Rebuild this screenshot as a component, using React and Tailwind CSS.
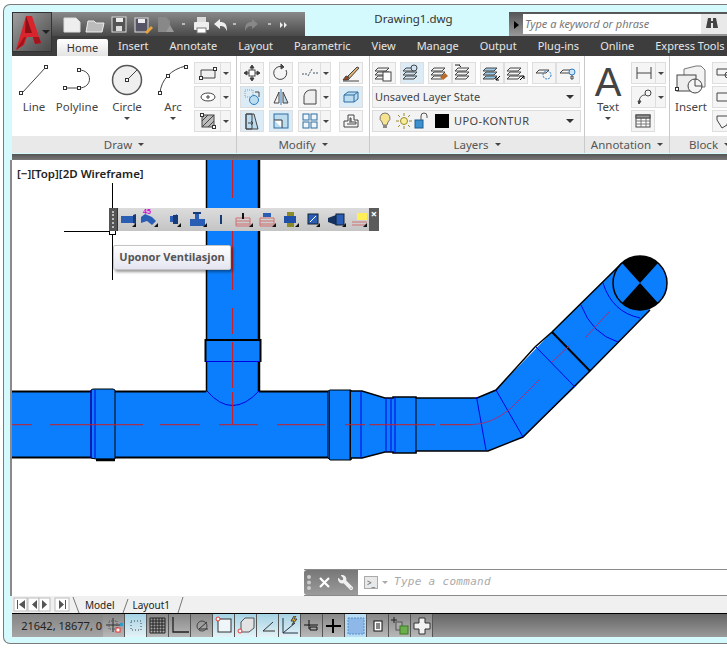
import { FaWrench } from "react-icons/fa";

const ui = { fontFamily: '"Noto Sans", "Open Sans", sans-serif' };

const Caret = ({ className = "" }) => (
  <span className={`inline-block w-0 h-0 border-l-[3px] border-r-[3px] border-t-[3px] border-l-transparent border-r-transparent border-t-[#444] ${className}`} />
);

const Ico = ({ w = 18, h = 18, children }) => (
  <svg width={w} height={h} viewBox={`0 0 ${w} ${h}`} fill="none" stroke="#444" strokeWidth="1" className="block">
    {children}
  </svg>
);

const Grip = ({ x, y }) => <rect x={x - 1.5} y={y - 1.5} width="3" height="3" fill="#fff" stroke="#333" strokeWidth="1" />;

// 24px tool button from the ribbon
const Tool = ({ children, on, className = "" }) => (
  <div className={`w-[24px] h-[22px] flex items-center justify-center border border-[#dedede] ${on ? "bg-[#dcecf6]" : "bg-[#f5f5f5]"} ${className}`}>
    {children}
  </div>
);

const Split = ({ children, w = 24 }) => (
  <div className="flex h-[22px] border border-[#dedede] bg-[#f5f5f5]" style={{ width: w + 11 }}>
    <div className="flex-1 flex items-center justify-center">{children}</div>
    <div className="w-[10px] flex items-center justify-center border-l border-[#dedede]"><Caret /></div>
  </div>
);

const BigTool = ({ w, label, arrow, children }) => (
  <div className="flex flex-col items-center shrink-0" style={{ width: w }}>
    <div className="h-[36px] mt-[6px] flex items-center justify-center">{children}</div>
    <span className="text-[11.5px] leading-[16px] mt-[1px] text-[#444]">{label}</span>
    {arrow && <Caret className="mt-[2px]" />}
  </div>
);

const Panel = ({ w, title, children }) => (
  <div className="flex flex-col shrink-0 border-r border-[#c9c9c9]" style={{ width: w }}>
    <div className="h-[80px] bg-white overflow-hidden">{children}</div>
    <div className="h-[17px] bg-[#e9e9e9] flex items-center justify-center gap-[6px] text-[11.5px] text-[#555] whitespace-nowrap">
      {title}
      <Caret />
    </div>
  </div>
);

const QatIcons = () => (
  <svg width="230" height="20" viewBox="0 0 230 20" className="block">
    <path d="M2 3h12l4 4v10H2z" fill="#eee" stroke="#ddd" />
    <path d="M26 6h6l2 2h8l-2 9H24z" fill="#bbb" stroke="#eee" />
    <rect x="50" y="2" width="14" height="15" fill="#555" stroke="#ddd" /><rect x="54" y="3" width="7" height="4" fill="#eee" /><rect x="54" y="11" width="6" height="5" fill="#ddd" />
    <rect x="73" y="3" width="13" height="14" fill="#556" stroke="#ddd" /><rect x="76" y="4" width="7" height="4" fill="#eee" /><path d="M83 17l6-6 2 2-6 6z" fill="#e8a33a" />
    <path d="M96 2h8l4 4v11H96z" fill="#888" /><path d="M104 17l4-7 4 7z" fill="#999" />
    <path d="M120 9h3" stroke="#bbb" strokeWidth="2" />
    <rect x="132" y="7" width="15" height="8" rx="1" fill="#eee" /><rect x="135" y="2" width="9" height="5" fill="#ddd" /><rect x="135" y="13" width="9" height="5" fill="#fff" stroke="#777" />
    <path d="M152 9l6-5v3c5 0 7 2 7 9-2-4-3-5-7-5v3z" fill="#eee" />
    <path d="M171 9h3" stroke="#bbb" strokeWidth="2" />
    <path d="M196 9l-6-5v3c-5 0-7 2-7 9 2-4 3-5 7-5v3z" fill="#888" />
    <path d="M206 9h3" stroke="#bbb" strokeWidth="2" />
    <path d="M218 7l3 3-3 3zM222 7l3 3-3 3z" fill="#eee" />
  </svg>
);

const AppButton = () => (
  <div className="absolute left-[8px] top-[7px] w-[40px] h-[40px] bg-gradient-to-br from-[#a0a0a0] to-[#4a4a4a] border border-[#333]">
    <svg width="38" height="38" viewBox="0 0 38 38">
      <path d="M3 37L13 3h6l9 27-6 1-2-7h-6l-3 8z" fill="#d8242c" />
      <path d="M13 3l-1 17h7z" fill="#8a1016" />
      <path d="M3 37l7-5 3-8h7l2 7 6-1-2-6H11z" fill="#a2141b" />
      <path d="M29 17h8l-4 4z" fill="#222" />
    </svg>
  </div>
);

const LayerStack = ({ extra, fill = "none" }) => (
  <Ico w={20} h={18}>
    <path d="M4 4h11l-3 3H1zM4 8h11l-3 3H1zM4 12h11l-3 3H1z" fill={fill} />
    {extra}
  </Ico>
);

const Toolbar = () => (
  <div className="absolute left-[97px] top-[48px] w-[270px] h-[23px] bg-[#5b5b5b] flex items-center">
    <div className="w-[9px] h-full bg-[#555] border-r border-[#333] flex items-center justify-center">
      <div className="w-[2px] h-[17px] border-l-2 border-dotted border-[#bbb]" />
    </div>
    <div className="w-[251px] h-full bg-gradient-to-b from-[#dcdcdc] to-[#c4c4c4]">
      <svg width="251" height="23" viewBox="118 208 251 23" className="block">
        <g fill="#2a5db4">
          <rect x="121" y="216" width="12" height="7" /><path d="M133 215l3-1v10l-3-1z" fill="#173a78" />
          <path d="M145 214l7 3 4 4-4 4-5-4-6 2v-6z" /><text x="143" y="214" fontSize="7" fontWeight="700" fill="#d400d4" fontFamily="Liberation Sans">45</text>
          <path d="M170 216h4l3-2v10l-3-2h-4z" /><rect x="173" y="215" width="5" height="9" fill="#173a78" />
          <rect x="190" y="219" width="15" height="7" /><rect x="195" y="213" width="4" height="7" /><rect x="193" y="212" width="8" height="2" fill="#173a78" />
          <rect x="220" y="215" width="2" height="9" fill="#173a78" />
        </g>
        <g fill="none">
          <path d="M236 218h14v8h-14zM236 221h14M236 224h14" stroke="#d07070" /><path d="M243 213v6" stroke="#111" strokeWidth="2" />
          <path d="M260 218h14v8h-14zM260 221h14M260 224h14" stroke="#d07070" /><rect x="263" y="213" width="8" height="4" fill="#2a5db4" />
        </g>
        <rect x="287" y="212" width="7" height="15" fill="#8a8a2a" /><rect x="284" y="216" width="12" height="7" fill="#1f4fa8" />
        <rect x="308" y="214" width="10" height="10" fill="#2a5db4" stroke="#123" /><path d="M310 222l6-6" stroke="#fff" />
        <path d="M328 218l8-3v10l-8-3z" fill="#16305f" /><rect x="336" y="214" width="8" height="11" fill="#2a5db4" stroke="#123" />
        <path d="M352 222h15M352 225h15" stroke="#d07070" /><rect x="357" y="213" width="10" height="7" fill="#ffee55" />
        <g fill="#111">
          <path d="M136 227l-4 0 4-4zM158 227h-4l4-4zM181 227h-4l4-4zM207 227h-4l4-4zM253 227h-4l4-4zM276 227h-4l4-4zM299 227h-4l4-4zM320 227h-4l4-4zM346 227h-4l4-4zM367 227h-4l4-4z" />
        </g>
      </svg>
    </div>
    <div className="flex-1 h-full bg-[#5b5b5b] text-white text-[11px] font-bold leading-[11px] text-center">×</div>
  </div>
);

const Drawing = () => (
  <svg width="715" height="436" viewBox="12 160 715 436" className="absolute inset-0">
    {/* vertical pipe */}
    <path d="M207 158V400H259V158" fill="#0a7efc" />
    <path d="M206.5 158V345" stroke="#000" strokeWidth="1.5" fill="none" />
    <path d="M259 158V393" stroke="#000" strokeWidth="2.5" fill="none" />
    <path d="M206.5 362V392" stroke="#000" strokeWidth="1.5" fill="none" />
    {/* main run */}
    <path d="M10 391.5H328V458H10z" fill="#0a7efc" />
    <path d="M10 391.5H206M259 391.5H328M10 457.5H328" stroke="#000" strokeWidth="2" fill="none" />
    <path d="M207 391Q232 420 259 391" stroke="#0000e0" fill="none" />
    <path d="M91 390Q92 389 94 389H113L115 390V459H96L91 458z" fill="#0a7efc" stroke="#000" />
    <path d="M96 460H115" stroke="#000" strokeWidth="2.5" />
    <path d="M91 390V458M95 390V458" stroke="#0000e0" />
    <path d="M328 391V458L330 460H351V390H330z" fill="#0a7efc" stroke="#000" />
    <path d="M329.5 390V459" stroke="#0000e0" />
    <path d="M350.5 390V460" stroke="#000" strokeWidth="2" />
    {/* reducer and next length */}
    <path d="M351 391H362L385 398H393V397H416V398H477L496 390L552 332L622 263L650 310L590 371L575 387L523 437L488 451H416V453H393V452H385L362 458H351z" fill="#0a7efc" />
    <path d="M351 391H362L385 398H393V397H416V398H477L496 390L535 347L552 332L622 263" stroke="#000" strokeWidth="1.5" fill="none" />
    <path d="M351 458H362L385 452H393V453H416V451H488L523 437L590 371L650 310" stroke="#000" strokeWidth="1.5" fill="none" />
    <path d="M361 391V458M386 398V452M391 398V452M395 397V453" stroke="#0000e0" />
    <path d="M416 397V453" stroke="#000" />
    <path d="M476.5 397L486 450M496 390L523 437M536 347L575 387" stroke="#0000e0" />
    <path d="M552 332L590 371" stroke="#000" strokeWidth="2" />
    <path d="M581 305Q592 334 618 342M603 283Q612 312 640 318" stroke="#0000e0" fill="none" />
    {/* collar on the branch */}
    <rect x="205.5" y="340" width="55" height="22" fill="#0a7efc" />
    <path d="M205.5 362V340H260.5V362" stroke="#000" strokeWidth="2" fill="none" />
    <path d="M206 361.5H260" stroke="#0000e0" />
    {/* end cap */}
    <circle cx="640" cy="283" r="27" fill="#0a7efc" stroke="#000" strokeWidth="1.5" />
    <path d="M622 263A27 27 0 0 1 658 263L640 283z" fill="#000" />
    <path d="M622 303A27 27 0 0 0 658 303L640 283z" fill="#000" />
    {/* centre lines */}
    <path d="M12 424.7H32M50 424.7H143M160 424.7H200M219 424.7H258M277 424.7H325M345 424.7H365M369 424.7H435M440 424.7H472" stroke="#c8202a" />
    <path d="M232.5 160V198M232.5 216V290M232.5 308V334M232.5 342V388M232.5 392V425" stroke="#c8202a" />
    <path d="M472 424.7Q492 424 510 409L540 379" stroke="#a0307a" fill="none" />
    <path d="M552 362L570 345M585 338L610 311" stroke="#a0307a" fill="none" />
    {/* crosshair */}
    <path d="M112.5 183V280M64 231.5H110" stroke="#000" />
    <rect x="109.5" y="228.5" width="6" height="6" fill="#fff" stroke="#000" />
  </svg>
);

const statusIcons = [
  { i: <><path d="M9 2v14M2 9h14" stroke="#333" /><rect x="5" y="5" width="8" height="8" stroke="#555" strokeDasharray="1 1" /><rect x="12" y="12" width="4" height="4" stroke="#e33" fill="#fff" /><rect x="16" y="7" width="3" height="3" fill="#39c" stroke="none" /></> },
  { on: 1, i: <rect x="5" y="5" width="10" height="9" stroke="#444" strokeDasharray="1 2" /> },
  { i: <path d="M2 2h15v15H2zM5 2v15M8 2v15M11 2v15M14 2v15M2 5h15M2 8h15M2 11h15M2 14h15" stroke="#222" /> },
  { i: <path d="M3 1v15h16" stroke="#222" strokeWidth="1.3" /> },
  { i: <><circle cx="10" cy="10" r="5" stroke="#444" /><path d="M7 13L15 6M7 13h9" stroke="#333" /></> },
  { on: 1, i: <><rect x="4" y="3" width="13" height="13" stroke="#333" fill="#eef6fa" /><circle cx="4" cy="3" r="2" stroke="#e33" fill="#fff" /></> },
  { on: 1, i: <><path d="M5 6l4-4h9v10l-5 4H5z" stroke="#555" fill="#e3e3e3" /><circle cx="4" cy="15" r="2" stroke="#e33" fill="#fff" /></> },
  { on: 1, i: <path d="M5 15L15 6M5 15h12" stroke="#333" /> },
  { on: 1, i: <><path d="M3 2v15h15M3 17L15 7" stroke="#234" /><path d="M14 0l-3 5h3l-2 4 5-6h-3l2-3z" fill="#e9a81f" /></> },
  { i: <path d="M2 9h14M7 4v9M8 11h7v3H8z" stroke="#111" /> },
  { i: <path d="M9 3v14M2 10h15" stroke="#000" strokeWidth="2" /> },
  { on: 2, i: <rect x="2" y="2" width="16" height="16" fill="#8db8e8" stroke="#5a8fc8" strokeDasharray="2 1" /> },
  { i: <><rect x="6" y="5" width="8" height="10" stroke="#111" fill="#fff" /><path d="M8 8h4M8 10h4M8 12h4" stroke="#111" /></> },
  { i: <><path d="M4 1v6M1 4h6" stroke="#222" /><rect x="6" y="6" width="6" height="8" fill="#aaa" stroke="#555" /><rect x="10" y="10" width="8" height="8" fill="#6cae4d" stroke="#3a7a22" /></> },
  { i: <path d="M7 2h6v5h5v6h-5v5H7v-5H2V7h5z" fill="#f2f2f2" stroke="#333" /> },
];

export default function App() {
  return (
    <div className="w-[727px] h-[649px] bg-white overflow-hidden pt-[4px] pl-[3px]" style={ui}>
      <div className="w-[724px] h-[640px] rounded-l-[7px] border-l border-t border-b border-[#7a7a7a] bg-[#d5fafd] pl-[8px] pt-[7px] flex flex-col relative">
        <AppButton />

        {/* title row */}
        <div className="flex h-[24px] shrink-0">
          <div className="w-[293px] h-full bg-gradient-to-b from-[#8a8a8a] to-[#4a4a4a] pl-[50px] pt-[3px]">
            <QatIcons />
          </div>
          <div className="w-[204px] pl-[13px] text-center text-[11.5px] leading-[16px] -mt-[1px] text-[#333]">Drawing1.dwg</div>
          <div className="flex-1 flex bg-gradient-to-b from-[#555] to-[#999] pt-[2px]">
            <div className="w-[14px] flex items-center justify-center">
              <span className="w-0 h-0 border-y-[4px] border-l-[5px] border-y-transparent border-l-black" />
            </div>
            <div className="w-[178px] h-[20px] bg-white text-[11px] leading-[20px] italic text-[#777] pl-[2px]">Type a keyword or phrase</div>
            <svg width="26" height="20" viewBox="0 0 26 20" className="bg-[#e9e9e9]">
              <path d="M7 4h3v3h2V4h3l2 10h-5V9h-2v5H5z" fill="#444" />
            </svg>
          </div>
        </div>

        {/* tabs */}
        <div className="h-[20px] shrink-0 bg-[#3d3d3d] flex items-end pl-[45px] text-[11px] text-[#e6e6e6] whitespace-nowrap overflow-hidden">
          <div className="w-[51px] shrink-0 h-[17px] bg-gradient-to-b from-white to-[#e4e4e4] text-[#333] text-center leading-[17px] rounded-t-[2px]">Home</div>
          <div className="flex items-center h-[20px] pl-[10px] gap-[21px] shrink-0">
            <span>Insert</span>
            <span>Annotate</span>
            <span>Layout</span>
            <span>Parametric</span>
            <span>View</span>
            <span>Manage</span>
            <span>Output</span>
            <span>Plug-ins</span>
            <span>Online</span>
            <span>Express Tools</span>
          </div>
        </div>

        {/* ribbon */}
        <div className="flex shrink-0 overflow-hidden">
          <Panel w={225} title="Draw">
            <div className="flex">
              <BigTool w={44} label="Line">
                <Ico w={30} h={32}><path d="M3 29L27 3" /><Grip x={2} y={29} /><Grip x={27} y={3} /></Ico>
              </BigTool>
              <BigTool w={42} label="Polyline">
                <Ico w={32} h={32}><path d="M3 24H18C32 24 32 6 18 6" /><Grip x={4} y={24} /><Grip x={18} y={24} /><Grip x={18} y={6} /></Ico>
              </BigTool>
              <BigTool w={58} label="Circle" arrow>
                <Ico w={32} h={32}>
                  <circle cx="16" cy="16" r="14.5" fill="#efefef" stroke="#555" strokeWidth="1.5" />
                  <path d="M16 16L26 6" /><Grip x={16} y={16} />
                </Ico>
              </BigTool>
              <BigTool w={34} label="Arc" arrow>
                <Ico w={32} h={32}><path d="M3 29C4 16 14 5 29 2" /><Grip x={3} y={29} /><Grip x={11} y={12} /><Grip x={29} y={3} /></Ico>
              </BigTool>
              <div className="flex flex-col gap-[2px] pt-[6px] ml-[4px]">
                <Split w={26}><Ico w={18} h={14}><path d="M2 4h14v8H2z" fill="#f0f0f0" /><Grip x={2} y={12} /><Grip x={16} y={3} /></Ico></Split>
                <Split w={26}><Ico w={18} h={14}><ellipse cx="9" cy="7" rx="7" ry="4" fill="#fff" /><path d="M9 5v4M7 7h4" /></Ico></Split>
                <Split w={26}><Ico w={18} h={18}><rect x="3" y="3" width="12" height="12" fill="#bbb" /><path d="M3 9l6-6M3 15L15 3M9 15l6-6" /><Grip x={3} y={3} /><Grip x={15} y={15} /></Ico></Split>
              </div>
            </div>
          </Panel>

          <Panel w={133} title="Modify">
            <div className="flex gap-[5px] pl-[3px] pt-[6px]">
              <div className="flex flex-col gap-[2px]">
                <Tool><Ico><path d="M9 2v14M2 9h14" /><rect x="6" y="6" width="6" height="6" fill="#fff" /><path d="M9 1l-2 3h4zM9 17l-2-3h4zM1 9l3-2v4zM17 9l-3-2v4z" fill="#333" /></Ico></Tool>
                <Tool on><Ico><rect x="2" y="2" width="8" height="7" stroke="#999" strokeDasharray="1 1" /><circle cx="11" cy="12" r="4.5" stroke="#2e7dc0" fill="#bcdcf0" /><path d="M12 4h4v5" /></Ico></Tool>
                <Tool on><Ico><path d="M5 2h6l4 15H3V2z" fill="#bcdcf0" /><path d="M3 2h6v15H3zM5 11h5M8 9l2 2-2 2" /></Ico></Tool>
              </div>
              <div className="flex flex-col gap-[2px]">
                <Tool><Ico><path d="M14 6A6.5 6.5 0 1 1 9 2.5" /><path d="M9 0l3 3-3 2z" fill="#444" /></Ico></Tool>
                <Tool><Ico><path d="M9 1v16" stroke="#2e7dc0" /><path d="M7 4v11H2z" /><path d="M11 4v11h5z" fill="#bcdcf0" /></Ico></Tool>
                <Tool on><Ico><rect x="2" y="2" width="14" height="14" fill="#bcdcf0" stroke="#2e6ca0" /><path d="M2 8h8v8" stroke="#333" fill="#fff" /></Ico></Tool>
              </div>
              <div className="flex flex-col gap-[2px] mr-[3px]">
                <Split w={22}><Ico w={18} h={14}><path d="M1 8h5M7 10l4-7M12 7h5" stroke="#456" strokeDasharray="2 1" /></Ico></Split>
                <Split w={22}><Ico><path d="M3 16V9c0-4 3-7 7-7h5v14z" fill="#eee" /></Ico></Split>
                <Split w={22}><Ico><g stroke="#2e6ca0" fill="#eef6fb"><rect x="2" y="2" width="6" height="6" /><rect x="10" y="2" width="6" height="6" /><rect x="2" y="10" width="6" height="6" /><rect x="10" y="10" width="6" height="6" /></g></Ico></Split>
              </div>
              <div className="flex flex-col gap-[2px]">
                <Tool><Ico><path d="M3 15L15 3l2 1L6 16z" fill="#e0b070" /><path d="M1 16h4l2-3-3-1z" fill="#a0471e" /><path d="M1 17h16" /></Ico></Tool>
                <Tool on><Ico><path d="M2 7l4-3h10v7l-4 3H2z" fill="#bcdcf0" stroke="#2e6ca0" /><path d="M2 7h10v7M12 7l4-3" stroke="#2e6ca0" /></Ico></Tool>
                <Tool><Ico><path d="M2 15V9h4V3h6v5h4v7z" /><path d="M5 12h9V10h-5V6H8v5" /></Ico></Tool>
              </div>
            </div>
          </Panel>

          <Panel w={215} title="Layers">
            <div className="pl-[2px] pt-[6px] flex flex-col gap-[2px]">
              <div className="flex gap-[4px]">
                <Tool><LayerStack extra={<rect x="9" y="8" width="8" height="9" fill="#fff" />} /></Tool>
                <Tool on><LayerStack fill="#cfe3f2" extra={<circle cx="12" cy="4" r="3" fill="#cfe3f2" />} /></Tool>
                <div className="flex">
                  <Tool><LayerStack extra={<path d="M10 13l5-4 3 3-5 4z" fill="#b5692a" stroke="none" />} /></Tool>
                  <Tool><LayerStack extra={<path d="M1 1h5M5 1l2 2" stroke="#222" />} /></Tool>
                </div>
                <div className="flex">
                  <Tool><LayerStack fill="#9ccbe8" extra={<path d="M18 12l-4 4M14 13v3h3" stroke="#000" />} /></Tool>
                  <Tool><LayerStack extra={<path d="M14 16l4-4M15 12h3v3" stroke="#000" />} /></Tool>
                </div>
                <div className="flex">
                  <Tool><Ico w={20} h={18}><path d="M5 6h10l-3 3H2z" /><circle cx="13" cy="11" r="4" stroke="#2e7dc0" strokeDasharray="2 1" /></Ico></Tool>
                  <Tool><Ico w={20} h={18}><path d="M5 6h10l-3 3H2z" /><circle cx="14" cy="8" r="3" fill="#cfe8f7" stroke="#2e7dc0" /><path d="M13 12h2v3h-2z" /></Ico></Tool>
                </div>
              </div>
              <div className="w-[209px] h-[22px] border border-[#dcdcdc] bg-[#f3f3f3] flex items-center justify-between pl-[2px] pr-[6px] text-[11px] text-[#444]">
                Unsaved Layer State
                <span className="w-0 h-0 border-x-[4px] border-t-[4px] border-x-transparent border-t-[#333]" />
              </div>
              <div className="w-[209px] h-[22px] border border-[#dcdcdc] bg-[#f3f3f3] flex items-center pl-[6px] pr-[6px] text-[11px] text-[#444]">
                <svg width="54" height="18" viewBox="0 0 54 18" className="shrink-0">
                  <path d="M6 1a5 5 0 0 1 3 9l-1 3H4l-1-3a5 5 0 0 1 3-9z" fill="#f7e38f" stroke="#777" /><rect x="4" y="13" width="4" height="3" fill="#888" />
                  <circle cx="25" cy="9" r="3.5" fill="#f7ee9a" stroke="#9a8a30" /><path d="M25 1v3M25 14v3M17 9h3M30 9h3M19 3l2 2M29 13l2 2M31 3l-2 2M21 13l-2 2" stroke="#9a8a30" />
                  <rect x="36" y="8" width="8" height="8" fill="#3b90cf" stroke="#1f5d90" /><path d="M42 8V4a3 3 0 0 1 6 0v2" stroke="#555" fill="none" />
                </svg>
                <span className="w-[14px] h-[14px] bg-black ml-[2px] mr-[5px] shrink-0" />
                <span className="tracking-[0.4px]">UPO-KONTUR</span>
                <span className="ml-auto w-0 h-0 border-x-[4px] border-t-[4px] border-x-transparent border-t-[#333]" />
              </div>
            </div>
          </Panel>

          <Panel w={85} title="Annotation">
            <div className="flex">
              <div className="w-[46px] flex flex-col items-center shrink-0">
                <span className="text-[40px] leading-[34px] h-[34px] mt-[9px] text-[#444]" style={{ fontFamily: '"Liberation Sans", sans-serif' }}>A</span>
                <span className="text-[11.5px] leading-[16px] text-[#444]">Text</span>
                <Caret className="mt-[2px]" />
              </div>
              <div className="flex flex-col gap-[2px] pt-[6px]">
                <Split w={24}><Ico w={18} h={14}><path d="M2 1v12M16 1v12M2 7h14" /></Ico></Split>
                <Split w={24}><Ico><path d="M4 16c0-6 2-9 6-9" /><circle cx="13" cy="5" r="3" /><path d="M4 16l-1-3 3 0z" fill="#444" /></Ico></Split>
                <Tool><Ico><rect x="2" y="3" width="14" height="12" fill="#fff" /><path d="M2 6h14M2 9h14M2 12h14M7 6v9M12 6v9" stroke="#777" /><rect x="2" y="3" width="14" height="3" fill="#999" /></Ico></Tool>
              </div>
            </div>
          </Panel>

          <Panel w={80} title="Block">
            <div className="flex">
              <BigTool w={42} label="Insert">
                <Ico w={32} h={32}>
                  <path d="M9 5l12-3h5l4 4v17H9z" fill="#f3f3f3" stroke="#777" />
                  <rect x="2" y="11" width="19" height="16" fill="#eee" />
                  <circle cx="20" cy="22" r="7" fill="#f5f5f5" /><path d="M20 22V15M20 22h7" /><Grip x={2} y={25} />
                </Ico>
              </BigTool>
              <div className="flex flex-col gap-[2px] pt-[6px]">
                <Tool><Ico><path d="M2 5h11v6H2z" /><circle cx="13" cy="11" r="3" /></Ico></Tool>
                <Tool><Ico><path d="M2 5h11v8H2z" /><path d="M14 3v5" stroke="#d59a1e" strokeWidth="2" /></Ico></Tool>
                <Tool><Ico><path d="M2 4h12l-2 9-5 3-5-8z" /></Ico></Tool>
              </div>
            </div>
          </Panel>
        </div>
        <div className="h-[1px] shrink-0" />
        <div className="h-[6px] shrink-0 bg-gradient-to-b from-[#555] to-[#777]" />

        {/* model space */}
        <div className="h-[436px] shrink-0 bg-white relative overflow-hidden shadow-[-2px_0_0_#8a8a8a]">
          <Drawing />
          <div className="absolute left-[5px] top-[7px] text-[11.5px] leading-[14px] font-semibold text-[#222]">[−][Top][2D Wireframe]</div>
          <Toolbar />
          <div className="absolute left-[101px] top-[85px] w-[118px] h-[25px] bg-gradient-to-b from-white to-[#e4e5f0] border border-[#c4c4c4] rounded-[2px] shadow-[2px_2px_3px_rgba(0,0,0,0.4)] flex items-center justify-center text-[11px] font-bold text-[#555] whitespace-nowrap">
            Uponor Ventilasjon
          </div>
          {/* command line */}
          <div className="absolute left-[292px] top-[409px] w-[423px] h-[27px] flex border-t border-b border-[#8a8a8a]">
            <div className="w-[54px] bg-gradient-to-b from-[#777] to-[#9b9b9b] rounded-tl-[3px] rounded-bl-[3px] flex items-center">
              <div className="w-[4px] h-[15px] ml-[3px] border-l-[4px] border-dotted border-[#ccc]" />
              <svg width="20" height="20" viewBox="0 0 20 20" className="ml-[4px]">
                <path d="M5 5l9 9M14 5l-9 9" stroke="#fff" strokeWidth="2.2" />
              </svg>
              <FaWrench className="text-[#f0f0f0] -scale-x-100 ml-[3px]" size={15} />
            </div>
            <div className="flex-1 bg-white flex items-center pl-[6px]">
              <span className="w-[14px] h-[13px] border border-[#aaa] bg-[#e8e8e8] text-[8px] leading-[11px] text-[#555] text-center">&gt;_</span>
              <span className="w-0 h-0 ml-[4px] border-x-[3px] border-t-[3px] border-x-transparent border-t-[#aaa]" />
              <span className="ml-[6px] text-[11px] italic text-[#aaa] tracking-[0.3px]" style={{ fontFamily: '"DejaVu Sans Mono", monospace' }}>Type a command</span>
            </div>
          </div>
        </div>

        {/* layout tabs */}
        <div className="h-[18px] shrink-0 bg-[#f0f0f0] flex items-center text-[10px] text-[#222] border-b border-black">
          <svg width="60" height="17" viewBox="0 0 60 17" className="shrink-0">
            <g fill="#fff" stroke="#bbb"><rect x="2" y="2" width="13" height="13" /><rect x="16" y="2" width="11" height="13" /><rect x="27" y="2" width="11" height="13" /><rect x="43" y="2" width="14" height="13" /></g>
            <g fill="#555"><path d="M5 4h1v9H5zM13 4v9L7 8.500zM25 4v9l-5-4.500zM30 4v9l5-4.500zM47 4v9l5-4.500zM53 4h1v9h-1z" /></g>
          </svg>
          <svg width="13" height="18" viewBox="0 0 13 18" className="shrink-0"><path d="M1 1l6 16" stroke="#777" fill="none" /></svg>
          <span className="leading-[16px]">Model</span>
          <svg width="11" height="18" viewBox="0 0 11 18" className="shrink-0 ml-[7px]"><path d="M1 17L6 3" stroke="#777" fill="none" /></svg>
          <span className="leading-[16px]">Layout1</span>
          <svg width="12" height="18" viewBox="0 0 12 18" className="shrink-0 ml-[7px]"><path d="M1 17L6 1" stroke="#777" fill="none" /></svg>
        </div>

        {/* status bar */}
        <div className="h-[23px] shrink-0 bg-gradient-to-b from-[#666] to-[#9a9a9a] flex text-[11px] text-[#222]">
          <div className="w-[91px] text-right bg-gradient-to-b from-[#858585] to-[#a5a5a5] leading-[23px] whitespace-nowrap overflow-hidden pr-[1px]">21642, 18677, 0</div>
          {statusIcons.map((s, n) => (
            <div
              key={n}
              className={`w-[22px] h-[23px] flex items-center justify-center border-r border-[#555] ${s.on === 2 ? "bg-[#b8dcf4]" : s.on ? "bg-gradient-to-b from-[#a4d2e4] to-[#e4f2f6]" : "bg-gradient-to-b from-[#888] to-[#b8b8b8]"}`}
            >
              <Ico w={20} h={20}>{s.i}</Ico>
            </div>
          ))}
        </div>

        <div className="flex-1" />
      </div>
    </div>
  );
}
